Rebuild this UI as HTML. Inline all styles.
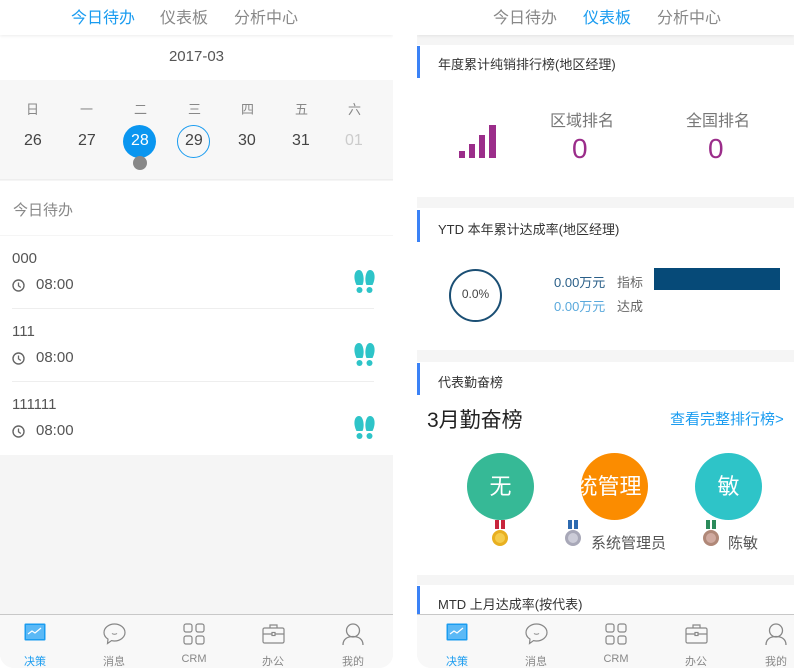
<!DOCTYPE html>
<html><head><meta charset="utf-8">
<style>
*{margin:0;padding:0;box-sizing:border-box}
body{width:794px;height:670px;background:#fff;position:relative;overflow:hidden;font-family:"Liberation Sans","Noto Sans CJK SC",sans-serif;color:#333}
.a{position:absolute}
.panel{position:absolute;top:0;height:668px;background:#f5f5f5;overflow:hidden;border-radius:0 0 14px 14px}
.nav{position:absolute;left:0;right:0;top:0;height:35px;background:#fff;box-shadow:0 1px 3px rgba(0,0,0,.08);font-size:16px;color:#888}
.nav span{position:absolute;top:4px}
.tab{position:absolute;left:0;right:0;top:614px;height:54px;background:#f8f8f8;border-top:1px solid #c8c8c8}
.tab .t{position:absolute;top:38px;font-size:11px;color:#888;transform:translateX(-50%);white-space:nowrap}
.tab svg{position:absolute;top:8px}
.card{position:absolute;left:0;right:0;background:#fff}
.bar{position:absolute;left:0;width:3px;background:#3b82f6}
.ct{position:absolute;left:21px;font-size:13px;color:#333}
</style></head><body>

<!-- LEFT PANEL -->
<div class="panel" style="left:0;width:393px;">
  <div class="a" style="left:0;top:35px;width:393px;height:45px;background:#fff"></div>
  <div class="a" style="left:0;top:48px;width:393px;text-align:center;font-size:15px;color:#555">2017-03</div>
  <div class="a" style="left:0;top:80px;width:393px;height:100px;background:#f7f7f7;border-bottom:1px solid #eee"></div>
  <div class="nav"><span style="left:71px;color:#1a9cf0">今日待办</span><span style="left:160px">仪表板</span><span style="left:234px">分析中心</span></div>
  <div class="a" style="top:99px;left:0;width:393px;font-size:13px;color:#888">
    <span class="a" style="left:26px">日</span><span class="a" style="left:80px">一</span><span class="a" style="left:134px">二</span><span class="a" style="left:188px">三</span><span class="a" style="left:241px">四</span><span class="a" style="left:295px">五</span><span class="a" style="left:348px">六</span>
  </div>
  <div class="a" style="left:123px;top:125px;width:33px;height:33px;border-radius:50%;background:#0a96f0"></div>
  <div class="a" style="left:133px;top:156px;width:14px;height:14px;border-radius:50%;background:#888"></div>
  <div class="a" style="left:177px;top:125px;width:33px;height:33px;border-radius:50%;border:1.5px solid #1a9cf0"></div>
  <div class="a" style="top:132px;left:0;width:393px;font-size:16px;color:#444">
    <span class="a" style="left:24px">26</span><span class="a" style="left:78px">27</span><span class="a" style="left:131px;color:#fff">28</span><span class="a" style="left:185px">29</span><span class="a" style="left:238px">30</span><span class="a" style="left:292px">31</span><span class="a" style="left:345px;color:#ccc">01</span>
  </div>
  <div class="a" style="left:0;top:181px;width:393px;height:54px;background:#fff"></div>
  <div class="a" style="left:13px;top:199px;font-size:15px;color:#888">今日待办</div>
  <div class="a" style="left:0;top:236px;width:393px;height:219px;background:#fff"></div>
  <div class="a" style="left:12px;top:308px;width:362px;height:1px;background:#eee"></div>
  <div class="a" style="left:12px;top:381px;width:362px;height:1px;background:#eee"></div>
  <div class="a" style="left:12px;top:250px;font-size:15px;color:#555">000</div>
  <div class="a" style="left:12px;top:323px;font-size:15px;color:#555">111</div>
  <div class="a" style="left:12px;top:396px;font-size:15px;color:#555">111111</div>
  <div class="a" style="left:36px;top:276px;font-size:15px;color:#555">08:00</div>
  <div class="a" style="left:36px;top:349px;font-size:15px;color:#555">08:00</div>
  <div class="a" style="left:36px;top:422px;font-size:15px;color:#555">08:00</div>
  <svg class="a" style="left:12px;top:279px" width="13" height="13" viewBox="0 0 13 13"><circle cx="6.5" cy="6.5" r="5.5" fill="none" stroke="#666" stroke-width="1.4"/><path d="M6.5 3.5V6.8L8.8 8.5" fill="none" stroke="#666" stroke-width="1.3"/></svg>
  <svg class="a" style="left:12px;top:352px" width="13" height="13" viewBox="0 0 13 13"><circle cx="6.5" cy="6.5" r="5.5" fill="none" stroke="#666" stroke-width="1.4"/><path d="M6.5 3.5V6.8L8.8 8.5" fill="none" stroke="#666" stroke-width="1.3"/></svg>
  <svg class="a" style="left:12px;top:425px" width="13" height="13" viewBox="0 0 13 13"><circle cx="6.5" cy="6.5" r="5.5" fill="none" stroke="#666" stroke-width="1.4"/><path d="M6.5 3.5V6.8L8.8 8.5" fill="none" stroke="#666" stroke-width="1.3"/></svg>
  <svg class="a" style="left:354px;top:270px" width="21" height="23" viewBox="0 0 21 23"><g fill="#2ec4c8"><path d="M5 0C1.5 0 0 4 0.5 8.5 1 12 2 14 2.5 15H8.5C9 14 10 11 9.5 7 9 3 7.5 0 5 0Z"/><path d="M16 0C19.5 0 21 4 20.5 8.5 20 12 19 14 18.5 15H12.5C12 14 11 11 11.5 7 12 3 13.5 0 16 0Z"/><rect x="2.5" y="17" width="6" height="6" rx="3"/><rect x="12.5" y="17" width="6" height="6" rx="3"/></g></svg>
  <svg class="a" style="left:354px;top:343px" width="21" height="23" viewBox="0 0 21 23"><g fill="#2ec4c8"><path d="M5 0C1.5 0 0 4 0.5 8.5 1 12 2 14 2.5 15H8.5C9 14 10 11 9.5 7 9 3 7.5 0 5 0Z"/><path d="M16 0C19.5 0 21 4 20.5 8.5 20 12 19 14 18.5 15H12.5C12 14 11 11 11.5 7 12 3 13.5 0 16 0Z"/><rect x="2.5" y="17" width="6" height="6" rx="3"/><rect x="12.5" y="17" width="6" height="6" rx="3"/></g></svg>
  <svg class="a" style="left:354px;top:416px" width="21" height="23" viewBox="0 0 21 23"><g fill="#2ec4c8"><path d="M5 0C1.5 0 0 4 0.5 8.5 1 12 2 14 2.5 15H8.5C9 14 10 11 9.5 7 9 3 7.5 0 5 0Z"/><path d="M16 0C19.5 0 21 4 20.5 8.5 20 12 19 14 18.5 15H12.5C12 14 11 11 11.5 7 12 3 13.5 0 16 0Z"/><rect x="2.5" y="17" width="6" height="6" rx="3"/><rect x="12.5" y="17" width="6" height="6" rx="3"/></g></svg>
  <div class="tab">
    <svg style="left:24px" width="22" height="18" viewBox="0 0 22 18"><rect x="0.5" y="0.5" width="21" height="17" rx="1" fill="#1a9cf0"/><rect x="2" y="2" width="18" height="14" fill="#5bb9f6"/><path d="M4 11 8 8 11 10 17 5" fill="none" stroke="#fff" stroke-width="1.2"/></svg>
    <span class="t" style="left:35px;color:#1a9cf0">决策</span>
    <svg style="left:103px" width="23" height="22" viewBox="0 0 23 22"><path d="M11.5 1C5.7 1 1 4.8 1 9.5c0 2.7 1.5 5 4 6.6L4.5 20.5 8.5 17.6c1 .3 2 .4 3 .4 5.8 0 10.5-3.8 10.5-8.5S17.3 1 11.5 1Z" fill="none" stroke="#888" stroke-width="1.2"/><path d="M9 10.5c1.3 1 3.7 1 5 0" fill="none" stroke="#888" stroke-width="1.1"/></svg>
    <span class="t" style="left:114px">消息</span>
    <svg style="left:183px" width="22" height="22" viewBox="0 0 22 22" fill="none" stroke="#888" stroke-width="1.2"><rect x="1" y="1" width="8" height="8" rx="2"/><rect x="13" y="1" width="8" height="8" rx="2"/><rect x="1" y="13" width="8" height="8" rx="2"/><rect x="13" y="13" width="8" height="8" rx="2"/></svg>
    <span class="t" style="left:194px">CRM</span>
    <svg style="left:262px" width="23" height="21" viewBox="0 0 23 21" fill="none" stroke="#888" stroke-width="1.2"><rect x="1" y="5" width="21" height="15" rx="1.5"/><path d="M8 5V2h7v3M1 11h21"/><rect x="10" y="9.5" width="3" height="3" fill="#fff"/></svg>
    <span class="t" style="left:273px">办公</span>
    <svg style="left:342px" width="22" height="22" viewBox="0 0 22 22" fill="none" stroke="#888" stroke-width="1.3"><circle cx="11" cy="7.5" r="6.5"/><path d="M1 22c0-6 4.5-8.5 10-8.5s10 2.5 10 8.5"/></svg>
    <span class="t" style="left:353px">我的</span>
  </div>
</div>

<!-- RIGHT PANEL -->
<div class="panel" style="left:417px;width:377px;border-radius:0 0 0 14px">
  <div class="nav"><span style="left:76px">今日待办</span><span style="left:166px;color:#1a9cf0">仪表板</span><span style="left:240px">分析中心</span></div>
  <div class="card" style="top:45px;height:152px">
    <div class="bar" style="top:1px;height:32px"></div>
    <div class="ct" style="top:9px">年度累计纯销排行榜(地区经理)</div>
    <svg class="a" style="left:42px;top:78px" width="38" height="35" viewBox="0 0 38 35" fill="#9b2d8a"><rect x="0" y="28" width="6" height="7"/><rect x="10" y="21" width="6" height="14"/><rect x="20" y="12" width="6" height="23"/><rect x="30" y="2" width="7" height="33"/></svg>
    <div class="a" style="left:133px;top:62px;font-size:16px;color:#777">区域排名</div>
    <div class="a" style="left:269px;top:62px;font-size:16px;color:#777">全国排名</div>
    <div class="a" style="left:155px;top:88px;font-size:28px;color:#9b2d8a">0</div>
    <div class="a" style="left:291px;top:88px;font-size:28px;color:#9b2d8a">0</div>
  </div>
  <div class="card" style="top:208px;height:142px">
    <div class="bar" style="top:2px;height:32px"></div>
    <div class="ct" style="top:11px">YTD 本年累计达成率(地区经理)</div>
    <div class="a" style="left:32px;top:61px;width:53px;height:53px;border-radius:50%;border:2px solid #1b4f74"></div>
    <div class="a" style="left:32px;top:79px;width:53px;text-align:center;font-size:12px;color:#444">0.0%</div>
    <div class="a" style="left:137px;top:64px;font-size:13px;color:#2a5f88">0.00万元</div>
    <div class="a" style="left:137px;top:88px;font-size:13px;color:#5aa9dc">0.00万元</div>
    <div class="a" style="left:200px;top:64px;font-size:13px;color:#666">指标</div>
    <div class="a" style="left:200px;top:88px;font-size:13px;color:#666">达成</div>
    <div class="a" style="left:237px;top:60px;width:126px;height:22px;background:#064a78"></div>
  </div>
  <div class="card" style="top:362px;height:213px">
    <div class="bar" style="top:1px;height:32px"></div>
    <div class="ct" style="top:10px">代表勤奋榜</div>
    <div class="a" style="left:10px;top:42px;font-size:21px;color:#222">3月勤奋榜</div>
    <div class="a" style="left:253px;top:46px;font-size:15px;color:#1a9cf0">查看完整排行榜&gt;</div>
    <div class="a" style="left:50px;top:91px;width:67px;height:67px;border-radius:50%;background:#36b996;color:#fff;font-size:22px;text-align:center;line-height:67px">无</div>
    <div class="a" style="left:164px;top:91px;width:67px;height:67px;border-radius:50%;background:#fb8c00;color:#fff;font-size:22px;line-height:67px;overflow:hidden;white-space:nowrap;text-align:center"><span style="margin-left:-12px">统管理</span></div>
    <div class="a" style="left:278px;top:91px;width:67px;height:67px;border-radius:50%;background:#2ec4c8;color:#fff;font-size:22px;text-align:center;line-height:67px">敏</div>
    <svg class="a" style="left:74px;top:158px" width="18" height="28" viewBox="0 0 18 28"><rect x="4" y="0" width="4" height="9" fill="#c8243c"/><rect x="10" y="0" width="4" height="9" fill="#c8243c"/><circle cx="9" cy="18" r="8" fill="#e8b020"/><circle cx="9" cy="18" r="5" fill="#f5cc4a"/></svg>
    <svg class="a" style="left:147px;top:158px" width="18" height="28" viewBox="0 0 18 28"><rect x="4" y="0" width="4" height="9" fill="#2d6ab0"/><rect x="10" y="0" width="4" height="9" fill="#2d6ab0"/><circle cx="9" cy="18" r="8" fill="#a8a8b8"/><circle cx="9" cy="18" r="5" fill="#ccccd8"/></svg>
    <svg class="a" style="left:285px;top:158px" width="18" height="28" viewBox="0 0 18 28"><rect x="4" y="0" width="4" height="9" fill="#2a8a5a"/><rect x="10" y="0" width="4" height="9" fill="#2a8a5a"/><circle cx="9" cy="18" r="8" fill="#b08878"/><circle cx="9" cy="18" r="5" fill="#d0aaa0"/></svg>
    <div class="a" style="left:174px;top:170px;font-size:15px;color:#555">系统管理员</div>
    <div class="a" style="left:311px;top:170px;font-size:15px;color:#555">陈敏</div>
  </div>
  <div class="card" style="top:585px;height:29px">
    <div class="bar" style="top:1px;height:28px"></div>
    <div class="ct" style="top:9px">MTD 上月达成率(按代表)</div>
  </div>
  <div class="tab">
    <svg style="left:29px" width="22" height="18" viewBox="0 0 22 18"><rect x="0.5" y="0.5" width="21" height="17" rx="1" fill="#1a9cf0"/><rect x="2" y="2" width="18" height="14" fill="#5bb9f6"/><path d="M4 11 8 8 11 10 17 5" fill="none" stroke="#fff" stroke-width="1.2"/></svg>
    <span class="t" style="left:40px;color:#1a9cf0">决策</span>
    <svg style="left:108px" width="23" height="22" viewBox="0 0 23 22"><path d="M11.5 1C5.7 1 1 4.8 1 9.5c0 2.7 1.5 5 4 6.6L4.5 20.5 8.5 17.6c1 .3 2 .4 3 .4 5.8 0 10.5-3.8 10.5-8.5S17.3 1 11.5 1Z" fill="none" stroke="#888" stroke-width="1.2"/><path d="M9 10.5c1.3 1 3.7 1 5 0" fill="none" stroke="#888" stroke-width="1.1"/></svg>
    <span class="t" style="left:119px">消息</span>
    <svg style="left:188px" width="22" height="22" viewBox="0 0 22 22" fill="none" stroke="#888" stroke-width="1.2"><rect x="1" y="1" width="8" height="8" rx="2"/><rect x="13" y="1" width="8" height="8" rx="2"/><rect x="1" y="13" width="8" height="8" rx="2"/><rect x="13" y="13" width="8" height="8" rx="2"/></svg>
    <span class="t" style="left:199px">CRM</span>
    <svg style="left:268px" width="23" height="21" viewBox="0 0 23 21" fill="none" stroke="#888" stroke-width="1.2"><rect x="1" y="5" width="21" height="15" rx="1.5"/><path d="M8 5V2h7v3M1 11h21"/><rect x="10" y="9.5" width="3" height="3" fill="#fff"/></svg>
    <span class="t" style="left:279px">办公</span>
    <svg style="left:348px" width="22" height="22" viewBox="0 0 22 22" fill="none" stroke="#888" stroke-width="1.3"><circle cx="11" cy="7.5" r="6.5"/><path d="M1 22c0-6 4.5-8.5 10-8.5s10 2.5 10 8.5"/></svg>
    <span class="t" style="left:359px">我的</span>
  </div>
</div>
</body></html>
